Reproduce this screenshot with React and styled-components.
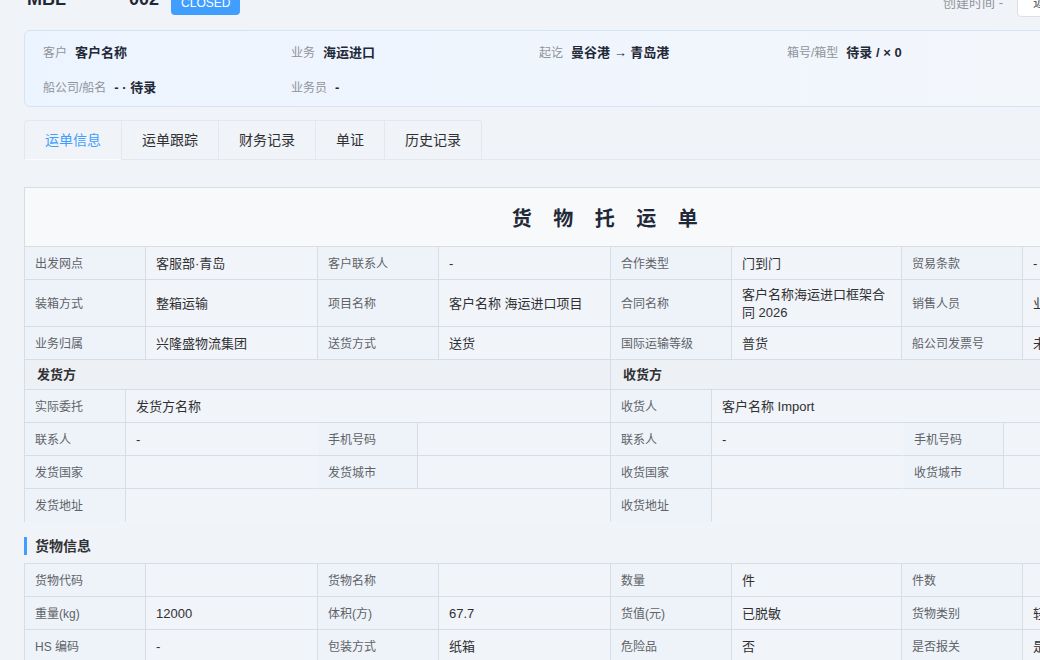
import React from 'react';
import styled, { createGlobalStyle } from 'styled-components';

const GlobalStyle = createGlobalStyle`
  html, body {
    margin: 0;
    padding: 0;
    overflow: hidden;
    background: #f0f3f8;
  }
  body {
    font-family: "Liberation Sans", "Noto Sans CJK SC", sans-serif;
    color: #303133;
  }
  * {
    box-sizing: border-box;
  }
`;

const Page = styled.div`
  width: 1220px;
  margin-top: -15px;
  padding: 0 24px 24px;
`;

const Header = styled.div`
  display: flex;
  align-items: center;
  justify-content: space-between;
  height: 32px;
  margin-bottom: 13px;
`;

const TitleGroup = styled.div`
  display: flex;
  align-items: center;
  gap: 12px;
`;

const OrderNo = styled.h1`
  margin: 0 0 4px 3px;
  font-size: 18px;
  font-weight: 700;
  line-height: 24px;
  color: #1f2937;
`;

const Badge = styled.span`
  display: inline-flex;
  align-items: center;
  height: 24px;
  margin-top: 3px;
  padding: 0 10px;
  border-radius: 4px;
  background: #409eff;
  color: #fff;
  font-size: 12px;
`;

const Actions = styled.div`
  display: flex;
  align-items: center;
  gap: 11px;
`;

const Meta = styled.span`
  margin-right: 3px;
  font-size: 13px;
  color: #909399;
`;

const Button = styled.button`
  height: 32px;
  padding: 0 ${p => (p.$wide ? '18px' : '15px')};
  border: 1px solid #dcdfe6;
  border-radius: 4px;
  background: #fff;
  color: #606266;
  font-family: inherit;
  font-size: 14px;
`;

const InfoCard = styled.div`
  display: grid;
  grid-template-columns: repeat(4, 248px);
  row-gap: 15px;
  padding: 12px 18px 8px;
  margin-bottom: 13px;
  border: 1px solid #d4e3f8;
  border-radius: 6px;
  background: linear-gradient(90deg, #ecf4ff 0%, #f4f7fb 100%);
`;

const InfoItem = styled.div`
  display: flex;
  gap: 8px;
  line-height: 20px;
  font-size: 13px;
`;

const InfoLabel = styled.span`
  font-size: 12px;
  color: #909399;
`;

const InfoValue = styled.span`
  font-weight: 700;
  color: #1f2937;
`;

const TabBar = styled.div`
  display: flex;
  margin-bottom: 27px;
  border-bottom: 1px solid #e4e7ed;
`;

const TabList = styled.div`
  display: flex;
  border: 1px solid #e4e7ed;
  border-bottom: none;
  border-radius: 4px 4px 0 0;
`;

const Tab = styled.div`
  height: 39px;
  margin-bottom: -1px;
  padding: 0 20px;
  line-height: 38px;
  font-size: 14px;
  color: ${p => (p.$active ? '#409eff' : '#303133')};
  border-left: 1px solid #e4e7ed;
  border-bottom: 1px solid ${p => (p.$active ? '#fafbfd' : 'transparent')};

  &:first-child {
    border-left: none;
  }
`;

const Sheet = styled.div`
  display: grid;
  grid-template-columns: 121px 172px 121px 172px 121px 170px 121px 174px;
  border-left: 1px solid #d8dce3;
  border-top: 1px solid #d8dce3;
`;

const SheetTitle = styled.div`
  grid-column: 1 / -1;
  display: flex;
  align-items: center;
  justify-content: center;
  height: 59px;
  padding-left: 10px;
  background: #f8f9fb;
  border-right: 1px solid #d8dce3;
  border-bottom: 1px solid #d8dce3;
  font-family: "Noto Sans CJK SC", sans-serif;
  font-size: 20px;
  font-weight: 700;
  letter-spacing: 21.5px;
  color: #1f2937;
`;

const Cell = styled.div`
  display: flex;
  align-items: center;
  min-height: 33px;
  padding: 6px 10px 4px;
  line-height: 18px;
  font-size: ${p => (p.$label ? '12px' : '13px')};
  color: ${p => (p.$label ? '#606266' : '#303133')};
  background: ${p => (p.$label ? '#eef3fa' : '#f1f4f9')};
  border-right: 1px solid ${p => (p.$open ? 'transparent' : '#d8dce3')};
  border-bottom: 1px solid ${p => (p.$last ? 'transparent' : '#d8dce3')};
`;

const Parties = styled.div`
  grid-column: 1 / -1;
  display: grid;
  grid-template-columns: 586px 586px;
`;

const PartyBlock = styled.div`
  display: grid;
  grid-template-columns: 101px 192px 100px 193px;
`;

const PartyHead = styled.div`
  grid-column: 1 / -1;
  height: 30px;
  padding: 0 12px;
  line-height: 29px;
  font-size: 13px;
  font-weight: 700;
  color: #303133;
  background: #edf0f5;
  border-right: 1px solid #d8dce3;
  border-bottom: 1px solid #d8dce3;
`;

const Wide = styled(Cell)`
  grid-column: span 3;
`;

const SectionTitle = styled.div`
  height: 18px;
  margin: 15px 0 8px;
  padding-left: 8px;
  border-left: 3px solid #409eff;
  line-height: 18px;
  font-size: 14px;
  font-weight: 700;
  color: #303133;
`;

const orderRows = [
  ['出发网点', '客服部·青岛', '客户联系人', '-', '合作类型', '门到门', '贸易条款', '-'],
  ['装箱方式', '整箱运输', '项目名称', '客户名称 海运进口项目', '合同名称', '客户名称海运进口框架合同 2026', '销售人员', '业务员'],
  ['业务归属', '兴隆盛物流集团', '送货方式', '送货', '国际运输等级', '普货', '船公司发票号', '未开票'],
];

const cargoRows = [
  ['货物代码', '', '货物名称', '', '数量', '件', '件数', ''],
  ['重量(kg)', '12000', '体积(方)', '67.7', '货值(元)', '已脱敏', '货物类别', '轻货'],
  ['HS 编码', '-', '包装方式', '纸箱', '危险品', '否', '是否报关', '是'],
];

const parties = [
  { title: '发货方', who: '实际委托', name: '发货方名称', prefix: '发货' },
  { title: '收货方', who: '收货人', name: '客户名称 Import', prefix: '收货' },
];

const tabs = ['运单信息', '运单跟踪', '财务记录', '单证', '历史记录'];

function Rows({ rows }) {
  return rows.map((row, r) =>
    row.map((text, i) => (
      <Cell key={`${r}-${i}`} $label={i % 2 === 0}>{text}</Cell>
    ))
  );
}

function Party({ p }) {
  return (
    <PartyBlock>
      <PartyHead>{p.title}</PartyHead>
      <Cell $label>{p.who}</Cell>
      <Wide>{p.name}</Wide>
      <Cell $label>联系人</Cell>
      <Cell $open>-</Cell>
      <Cell $label>手机号码</Cell>
      <Cell />
      <Cell $label>{p.prefix}国家</Cell>
      <Cell $open />
      <Cell $label>{p.prefix}城市</Cell>
      <Cell />
      <Cell $label $last>{p.prefix}地址</Cell>
      <Wide $last />
    </PartyBlock>
  );
}

export default function App() {
  return (
    <>
      <GlobalStyle />
      <Page>
        <Header>
          <TitleGroup>
            <OrderNo>MBL*********002</OrderNo>
            <Badge>CLOSED</Badge>
          </TitleGroup>
          <Actions>
            <Meta>创建时间 -</Meta>
            <Button>返回</Button>
            <Button $wide>打印托运单</Button>
          </Actions>
        </Header>

        <InfoCard>
          <InfoItem><InfoLabel>客户</InfoLabel><InfoValue>客户名称</InfoValue></InfoItem>
          <InfoItem><InfoLabel>业务</InfoLabel><InfoValue>海运进口</InfoValue></InfoItem>
          <InfoItem><InfoLabel>起讫</InfoLabel><InfoValue>曼谷港 → 青岛港</InfoValue></InfoItem>
          <InfoItem><InfoLabel>箱号/箱型</InfoLabel><InfoValue>待录 / × 0</InfoValue></InfoItem>
          <InfoItem><InfoLabel>船公司/船名</InfoLabel><InfoValue>- · 待录</InfoValue></InfoItem>
          <InfoItem><InfoLabel>业务员</InfoLabel><InfoValue>-</InfoValue></InfoItem>
        </InfoCard>

        <TabBar>
          <TabList>
            {tabs.map((t, i) => (
              <Tab key={t} $active={i === 0}>{t}</Tab>
            ))}
          </TabList>
        </TabBar>

        <Sheet>
          <SheetTitle>货物托运单</SheetTitle>
          <Rows rows={orderRows} />
          <Parties>
            {parties.map(p => <Party key={p.title} p={p} />)}
          </Parties>
        </Sheet>

        <SectionTitle>货物信息</SectionTitle>
        <Sheet>
          <Rows rows={cargoRows} />
        </Sheet>
      </Page>
    </>
  );
}
